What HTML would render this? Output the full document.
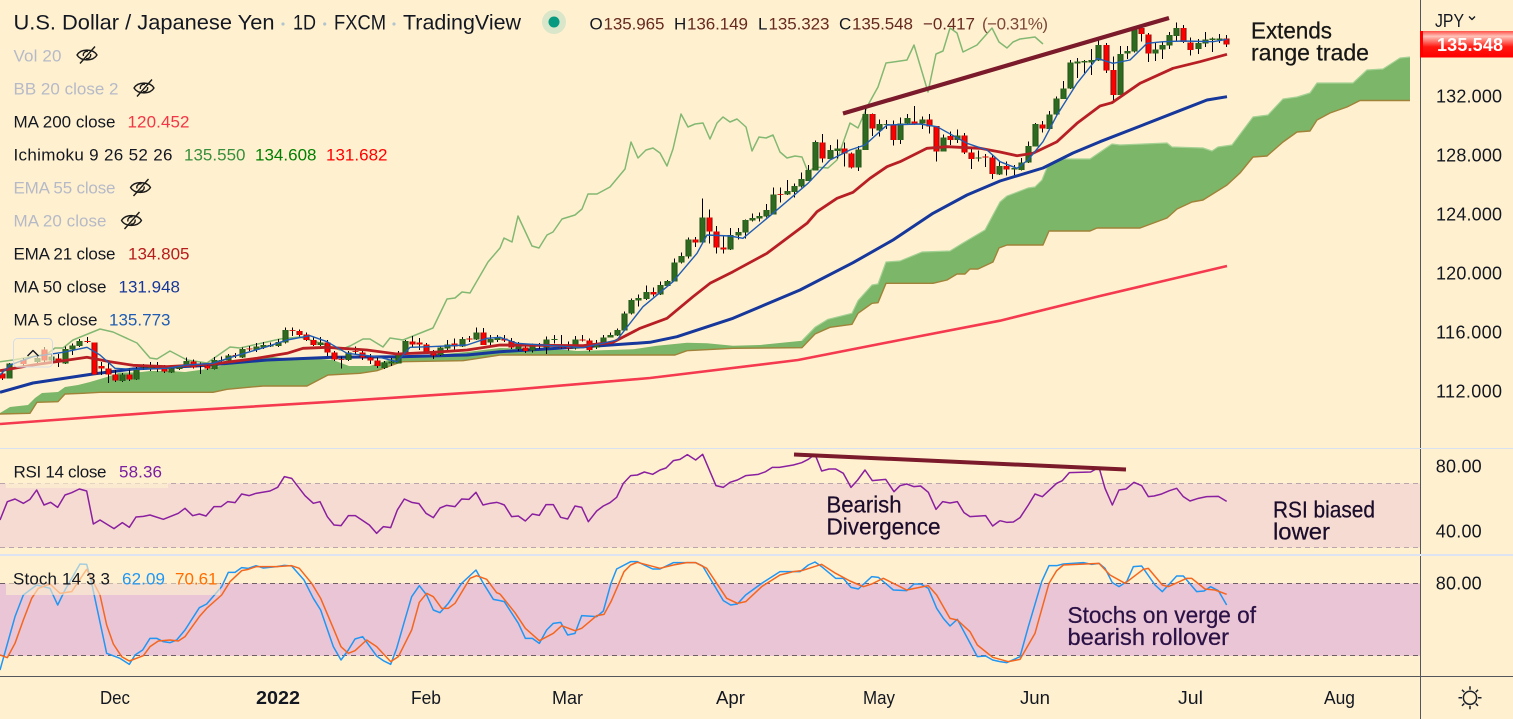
<!DOCTYPE html>
<html lang="en"><head><meta charset="utf-8"><title>USD/JPY chart</title>
<style>
html,body{margin:0;padding:0;background:#fff1cf;overflow:hidden}
svg{display:block;font-size:17px;font-family:"Liberation Sans",sans-serif}
text{fill:#131722}
.g{fill:#b6bac8}
.t{font-size:21px}
.a{font-size:23px;stroke-width:.25px}
.a1{fill:#161616;stroke:#161616}
.a2{fill:#1a0c2a;stroke:#1a0c2a}
.a3{fill:#2a1045;stroke:#2a1045}
.ax{font-size:18px}
.o{fill:#672a20}
polyline,path{stroke-linejoin:round}
</style></head><body>
<svg width="1513" height="719" viewBox="0 0 1513 719" xmlns="http://www.w3.org/2000/svg">
<defs>
<linearGradient id="tag" x1="0" y1="0" x2="0" y2="1"><stop offset="0" stop-color="#ff5048"/><stop offset=".2" stop-color="#ffc4ba"/><stop offset=".6" stop-color="#ff1810"/><stop offset="1" stop-color="#f00"/></linearGradient>
<path id="gb" d="M1219.5 38.5V40M1212.5 38.5V40M1205.5 39.5V43.5M1198.5 43V49M1176.5 28V36M1169.5 35V45.5M1162.5 45V49.5M1155.5 49.5V53.5M1134.5 29.5V51.5M1127.5 51V53.5M1120.5 54V95M1098.5 45V60.5M1091.5 60V62.5M1084.5 61V62.5M1077.5 61.5V63.5M1070.5 62.5V88.5M1063.5 88.5V99M1056.5 98.5V114.5M1049.5 114.5V129M1035.5 124V146.5M1028.5 146V162.5M1021.5 162.5V170M1014.5 168V169.5M999.5 166V174.5M978.5 157.5V158.5M957.5 135.5V140M943.5 137.5V151.5M922.5 119.5V123.5M907.5 118V123.5M900.5 123.5V140M886.5 124V124.8M879.5 124V130.5M865.5 114V150M858.5 149.5V167.5M837.5 148.5V151M830.5 150V159M815.5 142V170.5M808.5 170V181M801.5 179V186.5M794.5 186V192M787.5 191V194.5M773.5 194.5V214.5M766.5 210V216.5M759.5 216V218.5M752.5 218V220.5M745.5 220V232.5M738.5 232V235.5M730.5 235V249.5M702.5 217.5V242.5M688.5 239.5V256.5M681.5 256V262.5M674.5 262.5V281.5M667.5 281V286M660.5 285V294.5M646.5 292V299M638.5 298V300.5M631.5 300V313.5M624.5 313.5V330.5M617.5 330V335.5M610.5 335V337.5M603.5 337.5V343.5M596.5 343.5V347.5M575.5 339.5V348.5M554.5 339V340M546.5 339.5V347.5M532.5 346.5V350.5M518.5 346V349M497.5 338V340M490.5 339V342.5M476.5 332.5V339.5M462.5 339V346.5M447.5 344.5V348.5M440.5 347.5V355M405.5 341V353.5M398.5 352.5V363.5M391.5 361.5V363.5M384.5 362.5V368M348.5 352.5V360M320.5 342.5V345M285.5 330V342.5M278.5 342V346M270.5 345V346.5M263.5 345V347.5M256.5 346.5V350M242.5 349V357.5M228.5 355.5V360.5M221.5 360V360.8M214.5 360V369M200.5 364.5V366M186.5 361V366.5M179.5 365.5V369M171.5 368.5V372.5M150.5 366.5V369.5M143.5 366.5V367.5M136.5 370V379.5M122.5 374.5V381M79.5 341V346M72.5 345.5V349.5M65.5 349V363.5M51.5 356.5V360.5M37.5 358V362M9.5 363.5V378.5"/>
<path id="rb" d="M1226.5 38.5V44.5M1190.5 42.5V50M1183.5 28V42M1148.5 34.5V53.5M1141.5 28V34M1113.5 70V95M1106.5 45V70.5M1042.5 124.5V128.5M1006.5 166V169.5M992.5 157.5V174M985.5 156.5V157.5M971.5 152.5V159M964.5 135.5V152.5M950.5 136V140M936.5 126V151.5M929.5 119.5V126.5M914.5 121.5V123.5M893.5 124.5V140M872.5 114V128.5M851.5 153.5V167.5M844.5 148.5V153.5M822.5 142.5V158.5M780.5 194V194.8M723.5 247.5V249.5M716.5 231.5V247.5M709.5 217.5V231.5M695.5 239.5V242.5M653.5 292V294.5M589.5 340.5V350M582.5 339.5V340.5M568.5 346.5V348.5M561.5 345V347.5M539.5 345V346.5M525.5 347.5V351M511.5 341V347.5M504.5 338.5V340.5M483.5 332.5V345M469.5 338.5V339.5M454.5 343.5V346.5M433.5 352.5V355.5M426.5 344.5V352.5M419.5 342.5V344.5M412.5 341.5V344.5M377.5 360.5V366M370.5 357.5V360.5M362.5 352.5V357.5M355.5 351V351.8M341.5 359V359.8M334.5 352.5V359.5M327.5 342.5V352.5M313.5 340V345M306.5 334.5V340M299.5 331V335M292.5 330V330.8M249.5 348.5V349.3M235.5 355V355.8M207.5 366V368.5M193.5 361.5V367.5M164.5 369V371.5M157.5 367.5V369.5M129.5 374.5V379.5M115.5 374.5V380.5M108.5 368.5V374.5M101.5 366V368.5M94.5 342.5V374.5M87.5 341V342M58.5 358.5V362.5M44.5 349.5V360.5M23.5 360V364M2.5 373.5V378.5"/>
</defs>
<rect width="1513" height="719" fill="#fff1cf"/>

<!-- cloud -->
<path fill="#7cb668" d="M0 413 10 407 28 405 35 398 42 393 58 392 65 387 78 385 90 382 107 377 120 372.5 137 372.5 150 371 170 371 185 372 207 369 233 363 263 356 283 358 320 359 333 360 349 366 370 366 397 357 410 357 467 352 500 348 567 350 577 351 633 349.3 657 345.7 687 342.7 707 343.3 733 345.7 760 345 802 340.7 815 327.3 828 319.3 852 313.3 858 300.7 872 285 878 284 886 262 900 261 922 252 950 251 963 243 985 230 993 215 1000 202 1007 196 1015 193 1028 188 1035 187 1042 180 1048 165 1055 161 1063 159 1090 159 1112 144 1120 145 1167 143 1172 147 1203 148 1212 151 1218 147 1232 145 1253 117 1268 115 1283 99 1297 97 1310 93 1317 83 1353 83 1367 70 1383 69 1400 58 1410 57 1410 100.5 1360 100.5 1347 107 1330 113 1317 120 1310 131 1297 132 1283 142 1267 156 1253 157 1240 173 1227 185 1203 200 1192 202 1177 209 1167 218 1140 228 1097 228 1090 231 1049 231 1043 245 1007 245 999 248 993 262 978 269 970 269 965 274 957 274 947 280 933 283.3 886 283.3 878 302.7 872 303.3 858 313.3 852 324.3 830 327.3 815 334 802 347.7 733 348.3 687 350.7 675 355 500 355 463 360.7 403 361.7 397 363.3 377 370.7 360 373.3 328 375 307 386 263 386 227 389.3 213 392.3 100 392.3 83 393.3 65 394 58 401.7 37 402.3 30 413.3 0 414Z"/>
<path fill="none" stroke="#a5d195" stroke-width="1.2" d="M802 340.7 815 327.3 828 319.3 852 313.3 858 300.7 872 285 878 284 886 262 900 261 922 252 950 251 963 243 985 230 993 215 1000 202 1007 196 1015 193 1028 188 1035 187 1042 180 1048 165 1055 161 1063 159 1090 159 1112 144 1120 145 1167 143 1172 147 1203 148 1212 151 1218 147 1232 145 1253 117 1268 115 1283 99 1297 97 1310 93 1317 83 1353 83 1367 70 1383 69 1400 58 1410 57"/>
<path fill="none" stroke="#a08238" stroke-width="1.4" d="M1410 100.5 1360 100.5 1347 107 1330 113 1317 120 1310 131 1297 132 1283 142 1267 156 1253 157 1240 173 1227 185 1203 200 1192 202 1177 209 1167 218 1140 228 1097 228 1090 231 1049 231 1043 245 1007 245 999 248 993 262 978 269 970 269 965 274 957 274 947 280 933 283.3 886 283.3 878 302.7 872 303.3 858 313.3 852 324.3 830 327.3 815 334 802 347.7 733 348.3 687 350.7 675 355 500 355 463 360.7 403 361.7 397 363.3 377 370.7 360 373.3 328 375 307 386 263 386 227 389.3 213 392.3 100 392.3 83 393.3 65 394 58 401.7 37 402.3 30 413.3 0 414"/>

<!-- chikou -->
<path fill="none" stroke="#83b873" stroke-width="1.5" d="M0 361.7 13 360 47 354 55 348 63 348 73 340 100 329 113 332 137 343 150 358 157 359 170 351 187 360 207 363 230 347 240 348 280 339 300 337 320 343 340 350 350 346 363 339 370 339 383 347 390 338 403 340 433 328 447 299 455 298 462 292 470 293 488 262 500 248 504 238 512 242 518 216 532 246 539 248 547 235 553 232 562 219 575 215 582 209 588 194 597 194 610 187 625 169 631 142 638 158 646 150 653 148 660 153 667 166 673 149 681 114 688 127 695 124 703 123 710 139 717 123 723 117 730 122 737 119 746 127 752 151 759 137 766 138 773 135 780 152 787 158 795 156 802 157 808 172 815 167 828 168 837 160 850 123 858 128 868 105 878 87 886 63 907 60 914 45 928 92 936 54 943 51 950 28 957 33 963 52 977 45 992 28 999 42 1007 48 1013 42 1020 39 1035 37 1043 44"/>

<!-- MA200 -->
<path fill="none" stroke="#f5394f" stroke-width="2.6" d="M0 424 167 411.7 333 401.7 500 390.7 650 378 798 360 900 340 1000 320.7 1100 296 1227 266"/>
<!-- MA50 -->
<path fill="none" stroke="#16379b" stroke-width="3" d="M0 392.3 33 383 93 374 133 369 200 365.7 267 360 333 357.3 400 356.7 467 355 500 351.7 600 345.7 650 342.3 677 336.7 733 318.3 800 290 853 262.7 893 240 933 213.3 967 195 1000 181 1043 168 1073 153 1100 141.7 1143 125 1177 111.7 1207 100 1227 96.7"/>

<!-- candles -->
<path fill="none" stroke="#000" stroke-width="1" d="M1226.5 35V47M1219.5 34V43M1212.5 37.5V52M1205.5 32V47M1198.5 39V54M1190.5 37.5V55.5M1183.5 25V43M1176.5 22.5V40.5M1169.5 32V49M1162.5 41.5V59M1155.5 42.5V61M1148.5 33V62M1141.5 26V41.5M1134.5 26V52.5M1127.5 46V59M1120.5 46V95M1113.5 56.5V103M1106.5 43V73M1098.5 39V61M1091.5 49V75M1084.5 60V73M1077.5 58V78M1070.5 60V89M1063.5 81V99M1056.5 96.5V115M1049.5 111V130M1042.5 121V132.5M1035.5 123V146.5M1028.5 141.5V163M1021.5 158V170.5M1014.5 165V175M1006.5 161.5V175.5M999.5 161.5V175M992.5 155V179M985.5 154V167M978.5 150.5V161.5M971.5 148V169M964.5 133V154M957.5 129.5V143M950.5 131.5V145M943.5 134.5V151.5M936.5 126V161.5M929.5 114V133.5M922.5 116.5V129M914.5 106V125M907.5 114V125M900.5 117.5V144M893.5 120.5V145.5M886.5 120V129M879.5 119.5V136.5M872.5 113.5V136M865.5 108V150M858.5 146V171M851.5 152.5V168.5M844.5 142.5V166.5M837.5 139.5V158.5M830.5 145V159M822.5 134V162.5M815.5 140.5V170.5M808.5 165V181M801.5 172.5V187.5M794.5 183.5V197.5M787.5 180V195M780.5 187.5V202.5M773.5 187.5V214.5M766.5 204V217.5M759.5 212.5V221.5M752.5 213.5V221.5M745.5 219.5V238.5M738.5 228V239.5M730.5 228V250M723.5 236.5V253.5M716.5 226V253.5M709.5 209.5V243.5M702.5 198.5V243M695.5 237V247M688.5 237.5V258.5M681.5 252.5V263.5M674.5 258.5V281.5M667.5 280V286.5M660.5 281.5V295M653.5 287.5V296.5M646.5 285.5V300M638.5 294.5V306.5M631.5 298.5V314.5M624.5 311.5V330.5M617.5 328.5V336M610.5 332.5V337.5M603.5 335V344.5M596.5 340V349M589.5 338.5V351.5M582.5 335V341.5M575.5 336V349.5M568.5 341.5V350.5M561.5 335V348.5M554.5 335V343.5M546.5 336.5V354M539.5 343V349M532.5 343.5V352.5M525.5 345.5V353M518.5 342V351M511.5 338V349M504.5 335V342M497.5 335V342M490.5 335V345M483.5 328V345M476.5 327.5V340M469.5 336V342M462.5 337V347M454.5 338.5V350M447.5 340V350M440.5 346V356M433.5 350V359M426.5 343V353M419.5 338V350M412.5 336V347M405.5 340V355M398.5 351V363M391.5 358V366M384.5 361V369M377.5 357V368M370.5 354V364M362.5 350V360M355.5 346.5V355M348.5 351V361M341.5 356.5V368.5M334.5 351V361M327.5 340V356M320.5 337V346M313.5 336.5V346M306.5 332.5V341M299.5 329.5V336.5M292.5 327.5V336M285.5 327.5V343.5M278.5 339V347M270.5 342.5V347M263.5 342V349M256.5 343V352M249.5 346V351M242.5 347.5V358M235.5 353V358M228.5 354V362M221.5 356.5V363.5M214.5 357V369.5M207.5 364V370M200.5 362.5V374M193.5 359.5V368.5M186.5 357.5V367M179.5 365V370M171.5 365V373M164.5 365V373M157.5 362V372M150.5 362V371M143.5 364V370M136.5 367V380M129.5 368V381M122.5 373V382M115.5 370V382M108.5 362V383M101.5 362V375M94.5 342.5V374.5M87.5 337V343M79.5 339V347M72.5 343.5V355M65.5 346.5V364M58.5 354V367M51.5 354V362M44.5 347V362M37.5 355V364M23.5 358V366M9.5 363V378M2.5 369V380"/>
<g fill="none">
<use href="#gb" stroke="#17450f" stroke-width="6"/>
<use href="#gb" stroke="#2e6b20" stroke-width="4.4"/>
<use href="#rb" stroke="#5a0d0d" stroke-width="6"/>
<use href="#rb" stroke="#ff0000" stroke-width="4.4"/>
</g>

<!-- EMA21 -->
<path fill="none" stroke="#b71f25" stroke-width="2.8" d="M0 370.7 33 365 63 360.7 87 357.3 110 361.7 133 365.3 167 366.7 213 364 257 358.3 287 353.3 303 348.3 327 347.3 367 350 397 354 433 352.3 467 350 500 345 583 345.7 613 342.3 640 328.3 667 318.3 693 296.7 710 283.3 733 271.7 767 253.3 807 223.3 817 211.7 837 198.3 853 192.3 870 178.3 887 166.7 900 161.7 927 148.3 947 146.7 980 148.3 1000 152 1017 155.7 1033 153.3 1057 141.7 1077 123.3 1100 106 1112 102.7 1140 83.3 1173 68.3 1200 61.7 1227 54.3"/>
<!-- MA5 -->
<path fill="none" stroke="#1f5cb4" stroke-width="1.4" d="M0 375 10 365 33 356.7 63 352.3 87 347.3 100 355 115 368.3 133 369.3 167 368.3 187 365 213 363.3 233 356.7 267 346.7 287 340 310 335.7 327 341.7 347 353.3 377 356.7 397 361.7 410 347.3 430 346.7 467 345 487 338.3 500 337.3 517 343.3 583 347.7 617 340 643 306.7 673 281.7 697 253.3 707 235 730 236 743 238.3 773 213.3 808 183.3 830 160 850 150 865 145 887 125 920 124 937 126.7 967 143.3 987 150 1000 161.7 1017 168.3 1028 160 1043 141.7 1057 115 1077 83.3 1097 58.3 1113 63.3 1130 60 1147 43.3 1163 41.7 1183 41 1213 41.7 1227 39.3"/>

<!-- trendlines -->
<path stroke="#7a1a2a" stroke-width="4.2" fill="none" d="M843 113.5 1169 18"/>

<!-- RSI pane -->
<rect x="0" y="483.5" width="1420" height="64" fill="#f6dbd2"/>
<path stroke="#b9a6ad" stroke-dasharray="5 4" fill="none" d="M0 483.5H1420M0 547.5H1420"/>
<g transform="translate(0 440) scale(.33333)" fill="none" stroke="#8a1fa0" stroke-width="4.5">
<polyline points="0,240 22,185 45,177 70,190 90,178 110,150 132,195 152,187 173,202 195,165 215,158 238,147 260,153 280,252 300,240 342,266 367,248 388,262 408,231 430,229 450,225 490,238 535,220 555,205 578,227 598,222 618,228 642,200 663,200 683,185 705,188 725,162 747,167 768,160 810,153 833,142 853,110 875,115 915,167 940,190 960,185 982,230 1002,255 1023,257 1045,227 1066,227 1108,255 1130,280 1150,260 1172,263 1192,210 1213,177 1235,187 1257,191 1278,220 1300,233 1320,204 1340,196 1365,200 1385,177 1407,178 1428,157 1449,195 1470,190 1490,187 1500,190"/>
</g>
<g transform="translate(500 440) scale(.33333)" fill="none" stroke="#8a1fa0" stroke-width="4.5">
<polyline points="0,190 13,195 35,230 55,228 76,243 97,222 118,226 138,194 160,194 182,232 203,237 225,198 245,202 265,245 290,213 310,198 330,188 350,172 370,130 392,107 412,105 433,96 458,103 480,90 498,84 520,62 540,58 562,44 587,60 608,43 648,137 670,142 690,127 712,120 737,107 775,103 797,95 817,82 838,82 880,75 905,68 925,58 945,43 965,93 987,87 1007,87 1030,100 1053,142 1073,120 1095,90 1117,122 1157,118 1182,155 1200,137 1220,132 1242,140 1262,138 1285,157 1308,208 1328,185 1350,189 1372,185 1392,218 1410,230 1457,227 1478,258 1500,242"/>
</g>
<g transform="translate(1000 440) scale(.33333)" fill="none" stroke="#8a1fa0" stroke-width="4.5">
<polyline points="0,242 20,247 40,246 60,233 85,195 105,162 127,170 170,130 187,122 208,98 272,96 297,82 315,145 337,195 357,150 378,147 402,127 425,137 445,170 462,168 485,162 508,152 530,145 550,170 570,183 595,175 620,170 655,169 680,184"/>
</g>
<path stroke="#7a1a2a" stroke-width="4" fill="none" d="M794 454.5 1126 469.5"/>

<!-- Stoch pane -->
<rect x="0" y="583.5" width="1420" height="72.3" fill="#e9c5d5"/>
<path stroke="#6e5e66" stroke-dasharray="5 4" fill="none" d="M0 583.5H1420M0 655.5H1420"/>
<g transform="translate(0 440) scale(.33333)" fill="none" stroke-width="4.5">
<polyline stroke="#2196f3" points="0,690 45,530 70,465 110,435 150,445 173,495 195,450 240,372 260,373 275,430 320,640 360,655 388,673 405,645 428,630 450,595 470,595 490,605 510,608 530,600 555,570 598,503 620,492 665,440 685,397 705,397 725,383 745,385 768,377 790,384 830,380 853,376 875,378 912,420 940,475 962,510 1000,620 1023,660 1045,630 1065,597 1088,590 1130,648 1150,662 1172,673 1190,625 1213,545 1235,470 1258,437 1280,465 1300,510 1320,518 1345,490 1385,430 1428,390 1450,430 1480,478 1500,482"/>
<polyline stroke="#f4661f" points="0,645 22,653 45,610 70,540 95,475 115,445 150,432 180,460 215,455 260,388 300,465 320,555 340,612 365,650 388,663 430,647 450,620 475,603 510,600 535,603 555,590 598,530 620,505 665,465 690,425 725,392 745,388 768,380 830,380 875,377 898,385 935,430 962,475 1000,565 1023,620 1045,640 1065,632 1100,600 1130,620 1172,665 1195,650 1235,570 1258,487 1280,460 1300,470 1325,505 1345,505 1365,490 1410,415 1430,407 1460,418 1490,458 1500,462"/>
</g>
<g transform="translate(500 440) scale(.33333)" fill="none" stroke-width="4.5">
<polyline stroke="#2196f3" points="0,482 13,485 55,550 76,595 97,595 118,610 140,570 160,550 182,547 203,585 225,580 245,527 290,530 310,513 333,430 350,387 392,365 412,365 458,387 480,387 520,368 587,368 608,378 670,482 692,495 712,492 737,465 785,430 840,395 900,395 925,375 945,366 965,380 1007,415 1030,415 1053,442 1075,447 1115,410 1135,412 1180,450 1220,452 1242,432 1262,432 1285,445 1310,505 1330,535 1350,558 1372,538 1432,650 1457,648 1478,660 1500,665"/>
<polyline stroke="#f4661f" points="0,462 45,518 76,565 118,602 160,580 185,557 225,572 245,565 290,527 312,523 333,485 372,395 392,375 412,367 480,385 520,375 560,368 587,368 620,385 680,475 712,490 737,485 785,440 840,405 880,395 905,392 965,373 1007,400 1050,423 1090,440 1115,432 1150,415 1220,450 1285,437 1310,465 1350,535 1372,540 1410,575 1432,615 1478,652 1500,658"/>
</g>
<g transform="translate(1000 440) scale(.33333)" fill="none" stroke-width="4.5">
<polyline stroke="#2196f3" points="0,665 20,668 60,650 85,560 125,425 147,377 170,377 190,372 250,368 275,373 297,370 315,385 337,428 357,440 380,425 400,380 425,378 465,435 487,455 530,408 550,408 590,455 612,453 632,440 655,452 680,495"/>
<polyline stroke="#f4661f" points="0,658 25,665 60,658 105,580 147,430 170,392 190,375 297,370 330,405 375,430 430,388 445,385 487,435 505,440 560,415 575,415 615,447 645,450 680,463"/>
</g>
<rect x="6" y="462" width="162" height="26" fill="#fff1cf" fill-opacity=".6"/>
<rect x="6" y="563" width="214" height="32" fill="#fff1cf" fill-opacity=".6"/>

<!-- separators/axes -->
<path stroke="#d8e1ef" fill="none" d="M0 448.5H1513"/>
<path stroke="#dde3f0" stroke-width="2" fill="none" d="M0 555H1513"/>
<path stroke="#55565c" fill="none" d="M0 676.5H1513M1420.5 0V448M1420.5 449V554M1420.5 556V719"/>

<!-- title -->
<text class="t" x="13.5" y="29.5" textLength="261" lengthAdjust="spacingAndGlyphs">U.S. Dollar / Japanese Yen</text>
<circle cx="283" cy="24" r="1.6" fill="#b2c4cf"/>
<text class="t" x="293" y="29.5" textLength="23" lengthAdjust="spacingAndGlyphs">1D</text>
<circle cx="324.7" cy="24" r="1.6" fill="#b2c4cf"/>
<text class="t" x="334" y="29.5" textLength="52" lengthAdjust="spacingAndGlyphs">FXCM</text>
<circle cx="394" cy="24" r="1.6" fill="#b2c4cf"/>
<text class="t" x="403" y="29.5" textLength="118" lengthAdjust="spacingAndGlyphs">TradingView</text>
<circle cx="554" cy="22" r="12" fill="#d9e6c9"/>
<circle cx="554" cy="22" r="5.5" fill="#089981"/>

<!-- OHLC -->
<text x="589.5" y="29.5">O</text><text class="o" x="603.5" y="29.5" textLength="61">135.965</text>
<text x="674" y="29.5">H</text><text class="o" x="687" y="29.5" textLength="61">136.149</text>
<text x="758" y="29.5">L</text><text class="o" x="768.5" y="29.5" textLength="61">135.323</text>
<text x="839" y="29.5">C</text><text class="o" x="852" y="29.5" textLength="61">135.548</text>
<text class="o" x="923" y="29.5" textLength="52">−0.417</text>
<text class="o" x="982" y="29.5" textLength="66" opacity=".85">(−0.31%)</text>

<!-- legend -->
<text class="g" x="13.5" y="61.5" textLength="48">Vol 20</text>
<text class="g" x="13.5" y="94.5" textLength="105">BB 20 close 2</text>
<text x="13.5" y="127.5" textLength="102">MA 200 close</text><text x="127.5" y="127.5" textLength="62" style="fill:#f23645">120.452</text>
<text x="13.5" y="160.5" textLength="159">Ichimoku 9 26 52 26</text>
<text x="184" y="160.5" textLength="61.5" style="fill:#388e3c">135.550</text>
<text x="255" y="160.5" textLength="61.5" style="fill:#008000">134.608</text>
<text x="326" y="160.5" textLength="61.5" style="fill:#ff0000">131.682</text>
<text class="g" x="13.5" y="193.5" textLength="102">EMA 55 close</text>
<text class="g" x="13.5" y="226.5" textLength="93">MA 20 close</text>
<text x="13.5" y="259.5" textLength="102">EMA 21 close</text><text x="128" y="259.5" textLength="61.5" style="fill:#b71c1c">134.805</text>
<text x="13.5" y="292.5" textLength="93">MA 50 close</text><text x="118.5" y="292.5" textLength="61.5" style="fill:#16379b">131.948</text>
<text x="13.5" y="325.5" textLength="84">MA 5 close</text><text x="109" y="325.5" textLength="61.5" style="fill:#1f5cb4">135.773</text>
<text x="13.5" y="477.5" textLength="93">RSI 14 close</text><text x="119" y="477.5" textLength="43" style="fill:#7b1fa2">58.36</text>
<text x="13" y="584.5" textLength="97">Stoch 14 3 3</text><text x="122" y="584.5" textLength="43" style="fill:#2196f3">62.09</text><text x="175" y="584.5" textLength="42.5" style="fill:#ff6d00">70.61</text>
<g fill="none" stroke="#1b1b1b" stroke-width="1.4">
<g transform="translate(87 55)"><path d="M-10 0C-6-6.5 6-6.5 10 0 6 6.5-6 6.5-10 0ZM-3.5 1A3.6 3.6 0 0 1 1-3.5M3.5-1A3.6 3.6 0 0 1-1 3.5M-7 8.5 8-8.5"/></g>
<g transform="translate(144 88)"><path d="M-10 0C-6-6.5 6-6.5 10 0 6 6.5-6 6.5-10 0ZM-3.5 1A3.6 3.6 0 0 1 1-3.5M3.5-1A3.6 3.6 0 0 1-1 3.5M-7 8.5 8-8.5"/></g>
<g transform="translate(140.5 187.5)"><path d="M-10 0C-6-6.5 6-6.5 10 0 6 6.5-6 6.5-10 0ZM-3.5 1A3.6 3.6 0 0 1 1-3.5M3.5-1A3.6 3.6 0 0 1-1 3.5M-7 8.5 8-8.5"/></g>
<g transform="translate(131.5 220.5)"><path d="M-10 0C-6-6.5 6-6.5 10 0 6 6.5-6 6.5-10 0ZM-3.5 1A3.6 3.6 0 0 1 1-3.5M3.5-1A3.6 3.6 0 0 1-1 3.5M-7 8.5 8-8.5"/></g>
</g>
<rect x="13.5" y="338.5" width="39" height="28.5" rx="4" fill="#fff1cf" fill-opacity=".65" stroke="#d5dce8"/>
<path d="M27.5 356 33 350.5 38.5 356" fill="none" stroke="#131722" stroke-width="1.4"/>

<!-- annotations -->
<text class="a a1" x="1251" y="38.5" textLength="81" lengthAdjust="spacingAndGlyphs">Extends</text>
<text class="a a1" x="1251" y="60.5" textLength="118" lengthAdjust="spacingAndGlyphs">range trade</text>
<text class="a a2" x="826.5" y="512.5" textLength="75" lengthAdjust="spacingAndGlyphs">Bearish</text>
<text class="a a2" x="826.5" y="534.5" textLength="114" lengthAdjust="spacingAndGlyphs">Divergence</text>
<text class="a a2" x="1273" y="517.5" textLength="102" lengthAdjust="spacingAndGlyphs">RSI biased</text>
<text class="a a2" x="1273" y="539.5" textLength="57" lengthAdjust="spacingAndGlyphs">lower</text>
<text class="a a3" x="1067.5" y="623" textLength="188.5" lengthAdjust="spacingAndGlyphs">Stochs on verge of</text>
<text class="a a3" x="1067.5" y="645" textLength="161.5" lengthAdjust="spacingAndGlyphs">bearish rollover</text>

<!-- time axis -->
<text class="ax" x="100" y="704" textLength="30" lengthAdjust="spacingAndGlyphs">Dec</text>
<text class="ax" x="256" y="704" textLength="44" lengthAdjust="spacingAndGlyphs" font-weight="700">2022</text>
<text class="ax" x="411" y="704" textLength="30" lengthAdjust="spacingAndGlyphs">Feb</text>
<text class="ax" x="552" y="704" textLength="31" lengthAdjust="spacingAndGlyphs">Mar</text>
<text class="ax" x="716" y="704" textLength="29" lengthAdjust="spacingAndGlyphs">Apr</text>
<text class="ax" x="863" y="704" textLength="32" lengthAdjust="spacingAndGlyphs">May</text>
<text class="ax" x="1020" y="704" textLength="30" lengthAdjust="spacingAndGlyphs">Jun</text>
<text class="ax" x="1178" y="704" textLength="25" lengthAdjust="spacingAndGlyphs">Jul</text>
<text class="ax" x="1324" y="704" textLength="31" lengthAdjust="spacingAndGlyphs">Aug</text>

<!-- price axis -->
<text class="ax" x="1435" y="27" textLength="29" lengthAdjust="spacingAndGlyphs">JPY</text>
<text class="ax" x="1436" y="102.7" textLength="66">132.000</text>
<text class="ax" x="1436" y="161.7" textLength="66">128.000</text>
<text class="ax" x="1436" y="220.7" textLength="66">124.000</text>
<text class="ax" x="1436" y="279.7" textLength="66">120.000</text>
<text class="ax" x="1436" y="338.7" textLength="66">116.000</text>
<text class="ax" x="1436" y="397.7" textLength="66">112.000</text>
<text class="ax" x="1435.7" y="472.3" textLength="46">80.00</text>
<text class="ax" x="1435.7" y="537.3" textLength="46">40.00</text>
<text class="ax" x="1435.7" y="589.3" textLength="46">80.00</text>
<path d="M1469 16.5 1472 19.5 1475 16.5" fill="none" stroke="#131722" stroke-width="1.4"/>
<rect x="1420" y="31" width="93" height="26.5" fill="url(#tag)"/>
<rect x="1420" y="31" width="3" height="26.5" fill="#f00"/>
<text class="ax" x="1437" y="51" textLength="66" font-weight="700" style="fill:#fff">135.548</text>

<!-- sun -->
<g fill="none" stroke="#1b1f2a" stroke-width="1.5" transform="translate(1470 697.8)">
<circle r="6.6"/>
<path d="M0-8V-11.5M0 8V11.5M-8 0H-11.5M8 0H11.5M-5.7-5.7-8-8M5.7-5.7 8-8M-5.7 5.7-8 8M5.7 5.7 8 8"/>
</g>
</svg>
</body></html>
